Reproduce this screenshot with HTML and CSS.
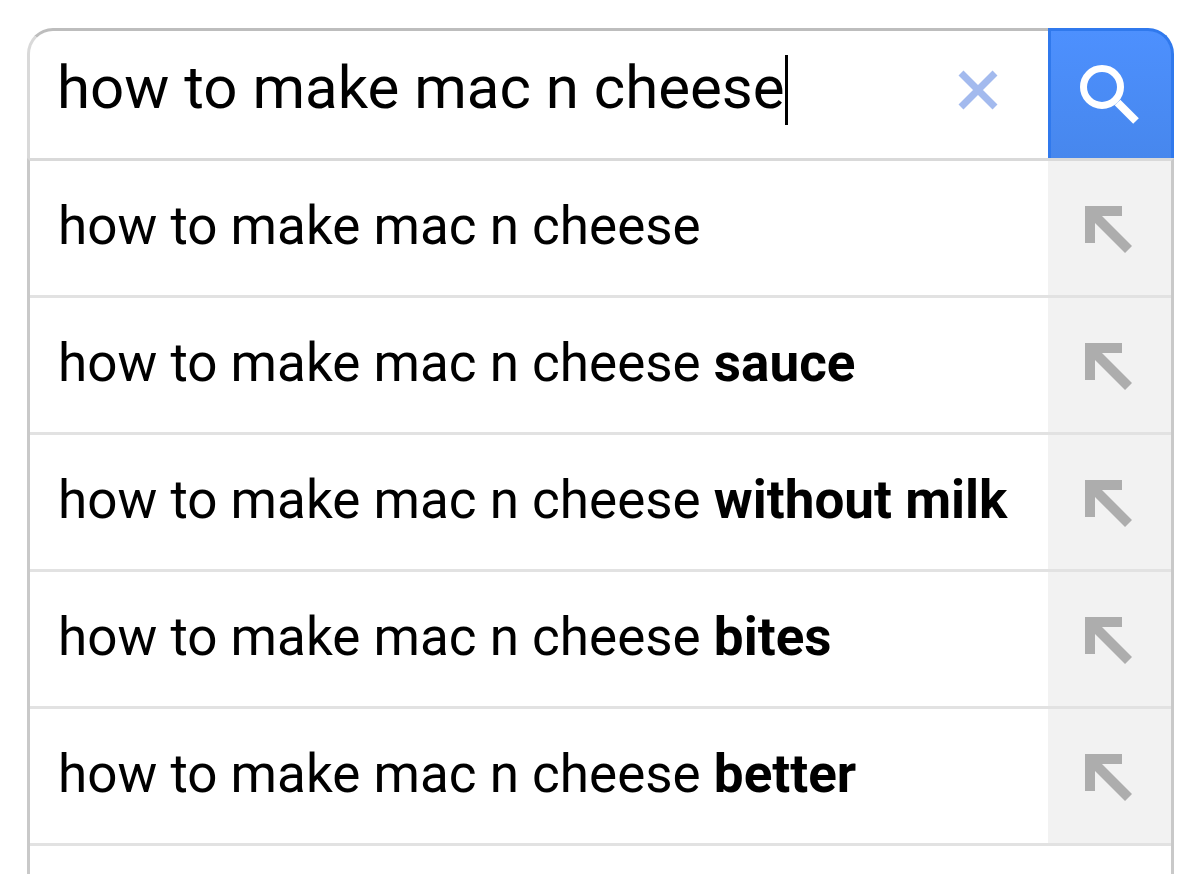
FILE: index.html
```html
<!DOCTYPE html>
<html lang="en">
<head>
<meta charset="utf-8">
<meta name="viewport" content="width=device-width, initial-scale=1">
<title>Search</title>
<link rel="stylesheet" href="styles.css">
</head>
<body>
<svg class="sprite" aria-hidden="true">
  <symbol id="arrow" viewBox="0 0 47 47"><path d="M0 0H37V10H17L47 40L40 47L10 17V37H0Z"/></symbol>
</svg>
<main class="search">
  <form class="bar" role="search">
    <div class="field">
      <input class="query" type="text" aria-label="Search" value="how to make mac n cheese" autocomplete="off" spellcheck="false">
      <span class="caret"></span>
      <button class="clear" type="reset" aria-label="Clear">
        <svg width="40" height="40" viewBox="0 0 40 40"><path d="M3 3L37 37M37 3L3 37" fill="none" stroke="#a3baee" stroke-width="7"/></svg>
      </button>
    </div>
    <button class="submit" type="submit" aria-label="Search">
      <svg width="62" height="60" viewBox="-1 0 62 60" fill="none" stroke="#fff"><circle cx="21" cy="22" r="18.5" stroke-width="7"/><path d="M36.500 37.500L55 56" stroke-width="8"/></svg>
    </button>
  </form>
  <ul class="list">
    <li class="row"><a class="text" href="#">how to make mac n cheese</a><button class="fill" type="button" aria-label="Use suggestion"><svg class="arrow"><use href="#arrow"/></svg></button></li>
    <li class="row"><a class="text" href="#">how to make mac n cheese <b>sauce</b></a><button class="fill" type="button" aria-label="Use suggestion"><svg class="arrow"><use href="#arrow"/></svg></button></li>
    <li class="row"><a class="text" href="#">how to make mac n cheese <b>without milk</b></a><button class="fill" type="button" aria-label="Use suggestion"><svg class="arrow"><use href="#arrow"/></svg></button></li>
    <li class="row"><a class="text" href="#">how to make mac n cheese <b>bites</b></a><button class="fill" type="button" aria-label="Use suggestion"><svg class="arrow"><use href="#arrow"/></svg></button></li>
    <li class="row"><a class="text" href="#">how to make mac n cheese <b>better</b></a><button class="fill" type="button" aria-label="Use suggestion"><svg class="arrow"><use href="#arrow"/></svg></button></li>
  </ul>
</main>
</body>
</html>
```
FILE: styles.css
```css
* {
  box-sizing: border-box;
}

body {
  margin: 0;
  background: #fff;
  color: #000;
  font-family: Roboto, "Liberation Sans", sans-serif;
}

button {
  padding: 0;
  border: 0;
  background: none;
}

svg {
  display: block;
}

.sprite {
  position: absolute;
  width: 0;
  height: 0;
}

.search {
  display: flex;
  flex-direction: column;
  min-height: 100vh;
  padding: 28px 26px 0 27px;
}

.bar {
  display: flex;
  height: 130px;
}

.field {
  display: flex;
  flex: 1;
  align-items: center;
  min-width: 0;
  padding: 0 50px 10px 27px;
  border-top: 3px solid #bdbdbd;
  border-left: 3px solid #d9d9d9;
  border-top-left-radius: 26px;
}

.query {
  field-sizing: content;
  min-width: 0;
  height: 70px;
  padding: 0 0 4px;
  border: 0;
  outline: 0;
  background: none;
  color: #000;
  caret-color: transparent;
  font: 60px/66px Roboto, "Liberation Sans", sans-serif;
}

.caret {
  flex: none;
  width: 3px;
  height: 70px;
  background: #000;
}

.clear {
  margin-left: auto;
}

.submit {
  display: flex;
  flex: none;
  align-items: center;
  justify-content: center;
  width: 126px;
  border: 3px solid #3079ed;
  border-bottom: 0;
  border-top-right-radius: 26px;
  background: linear-gradient(#4d90fe, #4787ed);
}

.list {
  flex: 1;
  margin: 0;
  padding: 0;
  border: 3px solid #c9c9c9;
  border-top-color: #d9d9d9;
  border-bottom: 0;
  list-style: none;
}

.row {
  display: flex;
  height: 137px;
  border-bottom: 3px solid #e2e2e2;
}

.text {
  flex: 1;
  padding-left: 28px;
  color: #000;
  font-size: 53px;
  line-height: 131px;
  text-decoration: none;
  white-space: nowrap;
}

.fill {
  display: flex;
  flex: none;
  align-items: center;
  justify-content: center;
  width: 123px;
  padding: 2px 2px 0 0;
  background: #f2f2f2;
}

.arrow {
  width: 47px;
  height: 47px;
  fill: #adadad;
}
```
